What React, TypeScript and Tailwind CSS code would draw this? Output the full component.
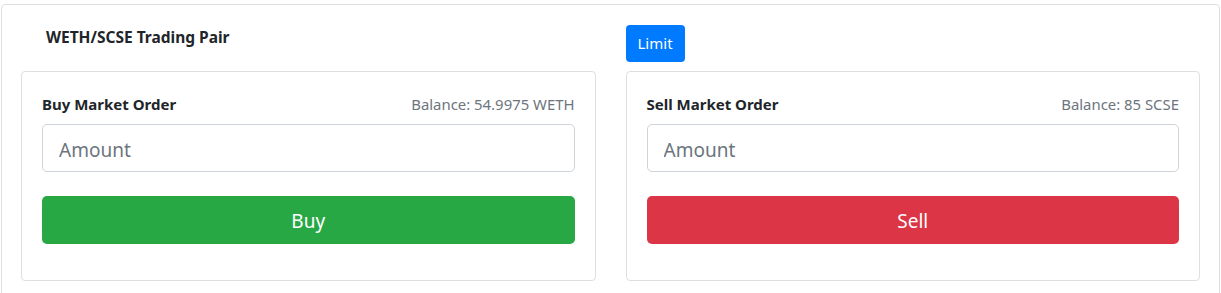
import React from "react";

const font = { fontFamily: '"Noto Sans", "Open Sans", sans-serif' };

function OrderCard({
  title,
  balance,
  action,
  color,
}: {
  title: string;
  balance: string;
  action: string;
  color: string;
}) {
  return (
    <div className="rounded-[4px] border border-[#dfdfdf] bg-white px-5 pt-5 pb-9">
      <div className="mb-2 flex h-6 items-center justify-between">
        <span className="text-[15px] font-bold text-[#212529]">{title}</span>
        <span className="text-[14.9px] text-[#6c757d]">{balance}</span>
      </div>
      <input
        placeholder="Amount"
        className="block h-12 w-full rounded-[5px] border border-[#ced4da] px-4 pt-[4px] text-[19px] text-[#495057] placeholder:text-[#6c757d] outline-none"
      />
      <button
        className={`mt-6 block h-12 w-full rounded-[5px] pt-[2px] text-[19px] text-white ${color}`}
      >
        {action}
      </button>
    </div>
  );
}

export default function App() {
  return (
    <div className="bg-white pt-1" style={font}>
      <div className="ml-[1px] mr-[1px] rounded-[4px] border border-[#dfdfdf] px-[19px] pt-5 pb-5">
        <div className="grid grid-cols-2 gap-[30px]">
          <div className="flex flex-col">
            <div className="mb-[9px] flex h-[37px] items-start pl-[25px]">
              <span className="text-[15.5px] font-bold leading-6 text-[#212529]">
                WETH/SCSE Trading Pair
              </span>
            </div>
            <OrderCard
              title="Buy Market Order"
              balance="Balance: 54.9975 WETH"
              action="Buy"
              color="bg-[#28a745]"
            />
          </div>
          <div className="flex flex-col">
            <div className="mb-[9px] flex h-[37px] items-start">
              <button className="h-[37px] rounded-[4px] bg-[#007bff] px-3 text-[15px] text-white">
                Limit
              </button>
            </div>
            <OrderCard
              title="Sell Market Order"
              balance="Balance: 85 SCSE"
              action="Sell"
              color="bg-[#dc3545]"
            />
          </div>
        </div>
      </div>
    </div>
  );
}
